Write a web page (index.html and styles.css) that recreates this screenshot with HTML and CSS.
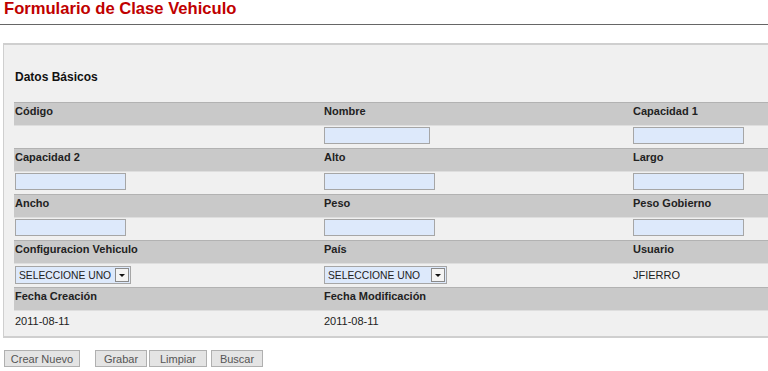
FILE: index.html
```html
<!DOCTYPE html>
<html lang="es">

<head>
    <meta charset="UTF-8">
    <meta name="viewport" content="width=device-width, initial-scale=1.0">
    <title>Formulario de Clase Vehiculo</title>
    <link rel="stylesheet" href="styles.css">
</head>

<body>
    <h1 class="page-title">Formulario de Clase Vehiculo</h1>

    <div class="panel">
        <h2 class="panel-title">Datos Básicos</h2>

        <div class="grid">
            <!-- fila 1 -->
            <div class="cell head">Código</div>
            <div class="cell head">Nombre</div>
            <div class="cell head">Capacidad 1</div>
            <div class="cell field"></div>
            <div class="cell field"><input type="text" class="txt txt-short"></div>
            <div class="cell field"><input type="text" class="txt"></div>

            <!-- fila 2 -->
            <div class="cell head">Capacidad 2</div>
            <div class="cell head">Alto</div>
            <div class="cell head">Largo</div>
            <div class="cell field"><input type="text" class="txt"></div>
            <div class="cell field"><input type="text" class="txt"></div>
            <div class="cell field"><input type="text" class="txt"></div>

            <!-- fila 3 -->
            <div class="cell head">Ancho</div>
            <div class="cell head">Peso</div>
            <div class="cell head">Peso Gobierno</div>
            <div class="cell field"><input type="text" class="txt"></div>
            <div class="cell field"><input type="text" class="txt"></div>
            <div class="cell field"><input type="text" class="txt"></div>

            <!-- fila 4 -->
            <div class="cell head">Configuracion Vehiculo</div>
            <div class="cell head">País</div>
            <div class="cell head">Usuario</div>
            <div class="cell field">
                <span class="combo">
                    <select class="combo-sel">
                        <option>SELECCIONE UNO</option>
                    </select>
                    <span class="combo-btn"></span>
                </span>
            </div>
            <div class="cell field">
                <span class="combo combo-wide">
                    <select class="combo-sel">
                        <option>SELECCIONE UNO</option>
                    </select>
                    <span class="combo-btn"></span>
                </span>
            </div>
            <div class="cell field value">JFIERRO</div>

            <!-- fila 5 -->
            <div class="cell head">Fecha Creación</div>
            <div class="cell head">Fecha Modificación</div>
            <div class="cell head"></div>
            <div class="cell field value last">2011-08-11</div>
            <div class="cell field value last">2011-08-11</div>
            <div class="cell field value last"></div>
        </div>
    </div>

    <div class="actions">
        <button class="btn btn-new">Crear Nuevo</button>
        <button class="btn btn-save">Grabar</button>
        <button class="btn btn-clear">Limpiar</button>
        <button class="btn btn-find">Buscar</button>
    </div>
</body>

</html>
```

FILE: styles.css
```css
/* styles.css */
html {
    overflow: hidden;
}

body {
    margin: 0;
    font-family: "Liberation Sans", Arial, sans-serif;
    font-size: 11px;
    color: #222;
    background: #fff;
}

.page-title {
    margin: 0;
    height: 24px;
    padding-left: 4px;
    font-size: 16.6px;
    line-height: 18px;
    font-weight: bold;
    color: #c00000;
    border-bottom: 1px solid #666;
}

.panel {
    width: 800px;
    margin: 18px 0 0 3px;
    background: #f0f0f0;
    border: 1px solid #cfcfcf;
    border-width: 2px 1px 2px 1px;
}

.panel-title {
    margin: 0;
    padding: 25px 0 18px 11px;
    font-size: 12px;
    line-height: 14px;
    color: #111;
}

.grid {
    display: grid;
    grid-template-columns: 309px 309px 1fr;
    margin-left: 10px;
}

.cell {
    padding-left: 1px;
    box-sizing: border-box;
}

.head {
    height: 23px;
    padding-top: 2px;
    line-height: 13px;
    font-weight: bold;
    background: #c9c9c9;
    border-top: 1px solid #b2b2b2;
}

.field {
    height: 23px;
    background: #f0f0f0;
    border-top: 1px solid #dedede;
}

.value {
    padding-top: 5px;
    line-height: 13px;
    height: 24px;
}

.last {
    height: 26px;
    padding-top: 4px;
}

.txt {
    display: block;
    box-sizing: border-box;
    width: 111px;
    height: 17px;
    margin-top: 1px;
    padding: 0 2px;
    background: #dde9fb;
    border: 1px solid #a6a6a6;
    font: inherit;
}

.txt-short {
    width: 106px;
}

.combo {
    display: flex;
    box-sizing: border-box;
    width: 116px;
    height: 18px;
    margin-top: 2px;
    background: #dde9fb;
    border: 1px solid #a6a6a6;
}

.combo-wide {
    width: 123px;
}

.combo-sel {
    flex: 1;
    min-width: 0;
    appearance: none;
    -webkit-appearance: none;
    border: none;
    background: transparent;
    padding: 0 0 0 3px;
    font-family: inherit;
    font-size: 10.3px;
    color: #222;
}

.combo-btn {
    width: 12px;
    margin: 1px;
    background: #f4f4f4;
    border: 1px solid #8a8a8a;
    display: flex;
    align-items: center;
    justify-content: center;
}

.combo-btn::after {
    content: "";
    border-left: 3px solid transparent;
    border-right: 3px solid transparent;
    border-top: 3px solid #111;
}

.actions {
    display: flex;
    margin: 12px 0 0 4px;
}

.btn {
    box-sizing: border-box;
    height: 17px;
    padding: 0;
    margin-right: 2px;
    background: #e4e4e4;
    border: 1px solid #b0b0b0;
    border-radius: 0;
    font-family: inherit;
    font-size: 11px;
    color: #555;
    cursor: pointer;
}

.btn-new {
    width: 76px;
    margin-right: 15px;
}

.btn-save {
    width: 52px;
}

.btn-clear {
    width: 58px;
    margin-right: 4px;
}

.btn-find {
    width: 52px;
}
```
